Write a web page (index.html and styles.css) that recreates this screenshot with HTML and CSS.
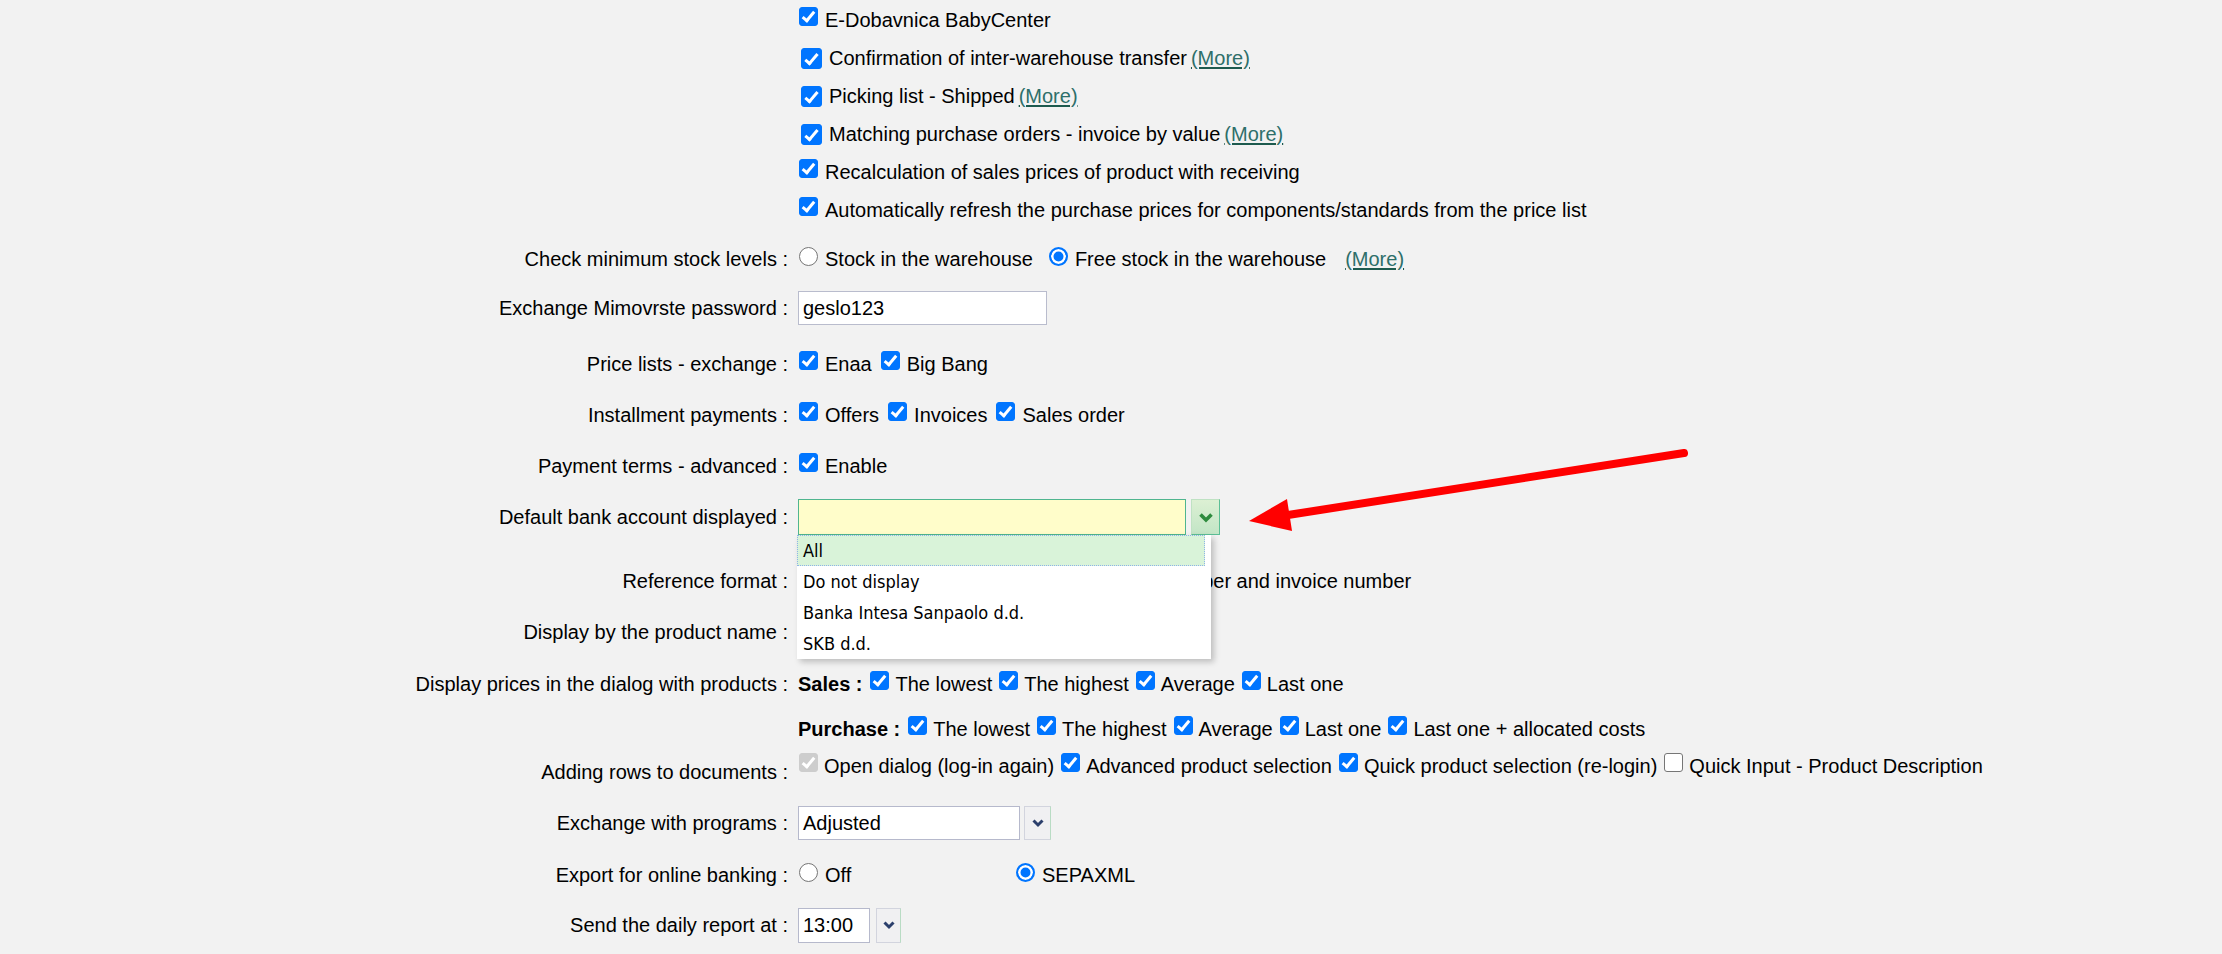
FILE: index.html
```html
<!DOCTYPE html>
<html lang="en">
<head>
<meta charset="utf-8">
<title>Settings</title>
<link rel="stylesheet" href="styles.css">
</head>
<body>
<div class="form">
  <div class="row top"><div class="label"></div><div class="content">
    <label class="opt"><input type="checkbox" checked>E-Dobavnica BabyCenter</label>
  </div></div>
  <div class="row top"><div class="label"></div><div class="content">
    <label class="opt lg"><input type="checkbox" checked>Confirmation of inter-warehouse transfer</label><a class="more" href="#">(More)</a>
  </div></div>
  <div class="row top"><div class="label"></div><div class="content">
    <label class="opt lg"><input type="checkbox" checked>Picking list - Shipped</label><a class="more" href="#">(More)</a>
  </div></div>
  <div class="row top"><div class="label"></div><div class="content">
    <label class="opt lg"><input type="checkbox" checked>Matching purchase orders - invoice by value</label><a class="more" href="#">(More)</a>
  </div></div>
  <div class="row top"><div class="label"></div><div class="content">
    <label class="opt"><input type="checkbox" checked>Recalculation of sales prices of product with receiving</label>
  </div></div>
  <div class="row top"><div class="label"></div><div class="content">
    <label class="opt"><input type="checkbox" checked>Automatically refresh the purchase prices for components/standards from the price list</label>
  </div></div>

  <div class="row mt12"><div class="label">Check minimum stock levels :</div><div class="content">
    <label class="opt rad wide"><input type="radio" name="stock">Stock in the warehouse</label>
    <label class="opt rad"><input type="radio" name="stock" checked>Free stock in the warehouse</label><a class="more far" href="#">(More)</a>
  </div></div>
  <div class="row mt13"><div class="label">Exchange Mimovrste password :</div><div class="content">
    <input class="text-input" type="text" value="geslo123">
  </div></div>
  <div class="row mt20"><div class="label">Price lists - exchange :</div><div class="content">
    <label class="opt"><input type="checkbox" checked>Enaa</label>
    <label class="opt"><input type="checkbox" checked>Big Bang</label>
  </div></div>
  <div class="row"><div class="label">Installment payments :</div><div class="content">
    <label class="opt"><input type="checkbox" checked>Offers</label>
    <label class="opt"><input type="checkbox" checked>Invoices</label>
    <label class="opt"><input type="checkbox" checked>Sales order</label>
  </div></div>
  <div class="row"><div class="label">Payment terms - advanced :</div><div class="content">
    <label class="opt"><input type="checkbox" checked>Enable</label>
  </div></div>
  <div class="row"><div class="label">Default bank account displayed :</div><div class="content">
    <div class="combo">
      <div class="combo-box"></div>
      <div class="combo-btn"><svg width="16" height="11" viewBox="0 0 16 11"><polyline points="2.5,2.5 8,8 13.5,2.5" fill="none" stroke="#2e8b3e" stroke-width="3.6"/></svg></div>
      <ul class="menu">
        <li class="menu-item active">All</li>
        <li class="menu-item">Do not display</li>
        <li class="menu-item">Banka Intesa Sanpaolo d.d.</li>
        <li class="menu-item">SKB d.d.</li>
      </ul>
    </div>
  </div></div>
  <div class="row mt28"><div class="label">Reference format :</div><div class="content">
    <label class="opt rad cell-ref"><input type="radio" name="ref">Invoice number</label>
    <label class="opt rad"><input type="radio" name="ref" checked>Customer number and invoice number</label>
  </div></div>
  <div class="row"><div class="label">Display by the product name :</div><div class="content">
    <label class="opt"><input type="checkbox" checked>Enable</label>
  </div></div>
  <div class="row mt16"><div class="label">Display prices in the dialog with products :</div><div class="content tight">
    <b class="group">Sales :</b>
    <label class="opt"><input type="checkbox" checked>The lowest</label>
    <label class="opt"><input type="checkbox" checked>The highest</label>
    <label class="opt"><input type="checkbox" checked>Average</label>
    <label class="opt"><input type="checkbox" checked>Last one</label>
  </div></div>
  <div class="row mt9"><div class="label"></div><div class="content tight">
    <b class="group">Purchase :</b>
    <label class="opt"><input type="checkbox" checked>The lowest</label>
    <label class="opt"><input type="checkbox" checked>The highest</label>
    <label class="opt"><input type="checkbox" checked>Average</label>
    <label class="opt"><input type="checkbox" checked>Last one</label>
    <label class="opt"><input type="checkbox" checked>Last one + allocated costs</label>
  </div></div>
  <div class="row mt1"><div class="label low">Adding rows to documents :</div><div class="content tight">
    <label class="opt"><input type="checkbox" checked disabled>Open dialog (log-in again)</label>
    <label class="opt"><input type="checkbox" checked>Advanced product selection</label>
    <label class="opt"><input type="checkbox" checked>Quick product selection (re-login)</label>
    <label class="opt"><input type="checkbox">Quick Input - Product Description</label>
  </div></div>
  <div class="row mt21"><div class="label">Exchange with programs :</div><div class="content">
    <div class="sel sel-wide">Adjusted</div>
    <div class="sel-btn"><svg width="14" height="10" viewBox="0 0 14 10"><polyline points="2.5,2.5 7,7 11.5,2.5" fill="none" stroke="#2b3f6c" stroke-width="3"/></svg></div>
  </div></div>
  <div class="row mt16"><div class="label">Export for online banking :</div><div class="content">
    <label class="opt rad cell-off"><input type="radio" name="bank">Off</label>
    <label class="opt rad"><input type="radio" name="bank" checked>SEPAXML</label>
  </div></div>
  <div class="row mt14"><div class="label">Send the daily report at :</div><div class="content">
    <div class="sel sel-time">13:00</div>
    <div class="sel-btn time-btn"><svg width="14" height="10" viewBox="0 0 14 10"><polyline points="2.5,2.5 7,7 11.5,2.5" fill="none" stroke="#2b3f6c" stroke-width="3"/></svg></div>
  </div></div>

  <svg class="arrow" width="2222" height="954" viewBox="0 0 2222 954">
    <line x1="1684" y1="453" x2="1288" y2="515" stroke="#ff0000" stroke-width="8" stroke-linecap="round"/>
    <polygon points="1249,521 1287,499 1292,531" fill="#ff0000"/>
  </svg>
</div>
</body>
</html>
```

FILE: styles.css
```css
html, body {
  margin: 0;
  padding: 0;
}
body {
  background: #f2f2f2;
  font-family: "Liberation Sans", Arial, sans-serif;
  font-size: 20px;
  color: #000;
  width: 2222px;
  height: 954px;
  overflow: hidden;
}
.form {
  position: relative;
  display: flex;
  flex-direction: column;
  padding-top: 1px;
  height: 953px;
}
.row {
  display: grid;
  grid-template-columns: 788px 1fr;
  column-gap: 10px;
  align-items: center;
  height: 36px;
  margin-top: 15px;
}
.row.top { height: 38px; margin-top: 0; }
.mt1 { margin-top: 1px; }
.mt9 { margin-top: 9px; }
.mt12 { margin-top: 12px; }
.mt13 { margin-top: 13px; }
.mt14 { margin-top: 14px; }
.mt16 { margin-top: 16px; }
.mt20 { margin-top: 20px; }
.mt21 { margin-top: 21px; }
.mt28 { margin-top: 28px; }

.label {
  text-align: right;
  white-space: nowrap;
}
.label.low { padding-top: 12px; }
.content {
  display: flex;
  align-items: center;
  white-space: nowrap;
  height: 100%;
}
.opt {
  display: inline-flex;
  align-items: center;
  margin-right: 8px;
}

/* checkboxes */
.opt input[type="checkbox"] {
  -webkit-appearance: none;
  appearance: none;
  position: relative;
  box-sizing: border-box;
  width: 19px;
  height: 19px;
  margin: 0 7px 7px 1px;
  border: 1px solid #767676;
  border-radius: 3px;
  background: #fff;
  flex: none;
}
.opt input[type="checkbox"]:checked {
  background: #0075ff;
  border-color: #0075ff;
}
.opt input[type="checkbox"]:checked::after {
  content: "";
  position: absolute;
  left: 5px;
  top: 1px;
  width: 4px;
  height: 10px;
  border: solid #fff;
  border-width: 0 3px 3px 0;
  transform: rotate(40deg);
}
.opt input[type="checkbox"]:disabled:checked {
  background: #cdcdcd;
  border-color: #cdcdcd;
}
.opt.lg input[type="checkbox"] {
  width: 21px;
  height: 21px;
  margin: 0 7px 0 3px;
}
.opt.lg input[type="checkbox"]:checked::after {
  left: 6px;
  top: 2px;
  height: 11px;
}
.opt.lg { margin-right: 4px; }

/* radios */
.opt input[type="radio"] {
  -webkit-appearance: none;
  appearance: none;
  box-sizing: border-box;
  width: 19px;
  height: 19px;
  margin: 0 7px 5px 1px;
  border: 1.5px solid #767676;
  border-radius: 50%;
  background: #fff;
  flex: none;
}
.opt input[type="radio"]:checked {
  border: 2px solid #0075ff;
  background: #0075ff;
  box-shadow: inset 0 0 0 2.5px #fff;
}

.tight .opt { margin-right: 6px; }
.tight .opt input[type="checkbox"] { margin-right: 6px; }
.tight .group { margin-right: 7px; }

.opt.wide { margin-right: 15px; }
.cell-off { width: 217px; margin-right: 0; }
.cell-ref { width: 246px; margin-right: 0; }
.group { margin-right: 8px; }
.more {
  color: #2e6f6a;
  text-decoration: underline;
  text-decoration-color: #1d5a4e;
  text-underline-offset: 2px;
}
.more.far { margin-left: 11px; }

.text-input {
  box-sizing: border-box;
  width: 249px;
  height: 34px;
  margin: 0;
  border: 1px solid #b9bccd;
  background: #fff;
  font-family: "Liberation Sans", Arial, sans-serif;
  font-size: 20px;
  padding: 0 4px;
  color: #000;
}

.combo {
  position: relative;
  display: flex;
  align-items: center;
  gap: 5px;
}
.combo-box {
  box-sizing: border-box;
  width: 388px;
  height: 36px;
  background: #fffdca;
  border: 1px solid #4fb58f;
}
.combo-btn {
  box-sizing: border-box;
  width: 29px;
  height: 36px;
  background: linear-gradient(#dcf0d3, #c2e5c6);
  border: 1px solid #bfe2c3;
  border-right-color: #5cbf96;
  border-bottom-color: #5cbf96;
  display: flex;
  align-items: center;
  justify-content: center;
}
.menu {
  position: absolute;
  left: -1px;
  top: 36px;
  width: 414px;
  margin: 0;
  padding: 0;
  list-style: none;
  background: #fff;
  box-shadow: 3px 3px 6px rgba(0, 0, 0, 0.22);
  font-family: "DejaVu Sans Condensed", "DejaVu Sans", sans-serif;
  font-stretch: condensed;
  font-size: 18px;
  z-index: 2;
}
.menu-item {
  box-sizing: border-box;
  height: 31px;
  line-height: 29px;
  padding-left: 5px;
  border: 1px solid transparent;
}
.menu-item.active {
  background: #d9f3d9;
  border: 1px dotted #8fb3e8;
  width: 408px;
}

.sel {
  box-sizing: border-box;
  height: 34px;
  background: #fff;
  border: 1px solid #b6b9cc;
  padding-left: 4px;
  display: flex;
  align-items: center;
}
.sel-wide { width: 222px; }
.sel-time { width: 72px; height: 35px; }
.sel-btn {
  box-sizing: border-box;
  width: 27px;
  height: 34px;
  margin-left: 4px;
  background: #f0f0f2;
  border: 1px solid #d2d4de;
  border-right-color: #b9dcc4;
  display: flex;
  align-items: center;
  justify-content: center;
}
.time-btn { width: 25px; height: 35px; margin-left: 6px; }

.arrow {
  position: absolute;
  left: 0;
  top: 0;
  pointer-events: none;
  z-index: 3;
}
```
